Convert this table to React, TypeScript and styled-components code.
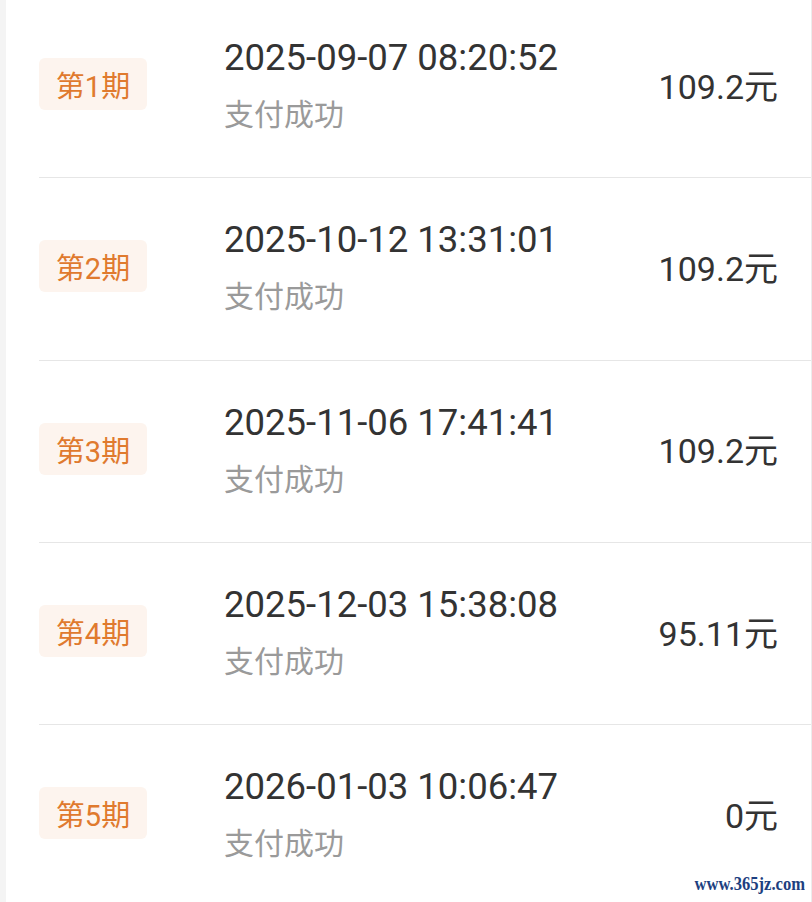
import React from "react";
import styled, { createGlobalStyle } from "styled-components";

const Global = createGlobalStyle`
  html, body { margin: 0; padding: 0; background: #ffffff; }
  body { width: 812px; height: 902px; overflow: hidden; }
  #root { height: 902px; }
`;

const Page = styled.div`
  position: relative;
  width: 812px;
  height: 902px;
  overflow: hidden;
  display: flex;
  background: #ffffff;
  font-family: Roboto, "Noto Sans CJK SC", sans-serif;
`;

const Gutter = styled.div`
  width: 6px;
  flex: none;
  background: #f4f4f4;
`;

const List = styled.div`
  flex: 1;
  display: flex;
  flex-direction: column;
  margin-top: -4px;
  border-right: 1px solid #ececec;
`;

const Row = styled.div`
  box-sizing: border-box;
  height: 182.3px;
  flex: none;
  margin-left: 33px;
  padding: 0 33px 5px 0;
  display: grid;
  grid-template-columns: 185px 1fr auto;
  align-items: center;
  border-bottom: 1px solid #e6e6e6;
`;

const Badge = styled.div`
  width: 108px;
  height: 52px;
  border-radius: 6px;
  background: #fdf4ee;
  color: #e07a2e;
  font-size: 29px;
  display: flex;
  align-items: center;
  justify-content: center;
  font-family: Roboto, "Noto Sans CJK SC", sans-serif;
`;

const Info = styled.div`
  display: flex;
  flex-direction: column;
  gap: 12px;
`;

const DateText = styled.div`
  font-size: 36.5px;
  line-height: 44px;
  color: #333333;
  white-space: nowrap;
`;

const Status = styled.div`
  font-size: 30px;
  line-height: 40px;
  color: #9a9a9a;
  font-family: "Noto Sans CJK SC", sans-serif;
`;

const Amount = styled.div`
  font-size: 34px;
  color: #333333;
  white-space: nowrap;
  text-align: right;
`;

const Watermark = styled.div`
  position: absolute;
  right: 7px;
  bottom: 7px;
  font-family: "Liberation Serif", serif;
  font-weight: bold;
  font-size: 18px;
  transform: scaleX(0.92);
  transform-origin: right bottom;
  color: #1d3f80;
`;

const records = [
  { n: 1, date: "2025-09-07 08:20:52", amount: "109.2" },
  { n: 2, date: "2025-10-12 13:31:01", amount: "109.2" },
  { n: 3, date: "2025-11-06 17:41:41", amount: "109.2" },
  { n: 4, date: "2025-12-03 15:38:08", amount: "95.11" },
  { n: 5, date: "2026-01-03 10:06:47", amount: "0" },
];

export default function App() {
  return (
    <Page>
      <Global />
      <Gutter />
      <List>
        {records.map((r) => (
          <Row key={r.n}>
            <Badge>第{r.n}期</Badge>
            <Info>
              <DateText>{r.date}</DateText>
              <Status>支付成功</Status>
            </Info>
            <Amount>{r.amount}元</Amount>
          </Row>
        ))}
      </List>
      <Watermark>www.365jz.com</Watermark>
    </Page>
  );
}
